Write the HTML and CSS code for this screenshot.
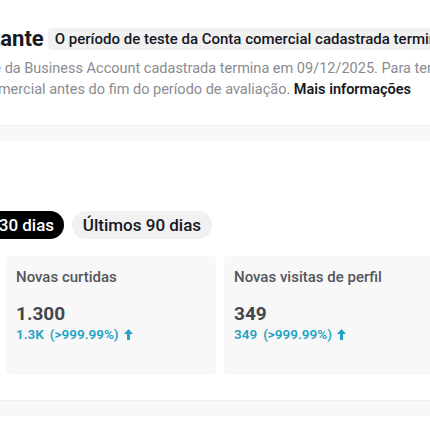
FILE: index.html
```html
<!DOCTYPE html>
<html lang="pt-BR">
<head>
<meta charset="utf-8">
<title>Análises</title>
<link rel="stylesheet" href="styles.css">
</head>
<body>
<div class="page">
  <section class="notice">
    <div class="title-row">
      <h2 class="notice-title">Importante</h2>
      <span class="notice-badge">O período de teste da Conta comercial cadastrada termina em breve</span>
    </div>
    <div class="notice-text">
      <div class="line line-1">O período de teste da Business Account cadastrada termina em 09/12/2025. Para ter acesso contínuo,</div>
      <div class="line line-2"><span>mude para uma conta comercial antes do fim do período de avaliação. <a class="more" href="#">Mais informações</a></span></div>
    </div>
  </section>

  <div class="band"></div>

  <section class="overview">
    <div class="tabs">
      <button class="tab tab-active">Últimos 30 dias</button>
      <button class="tab">Últimos 90 dias</button>
    </div>
    <div class="cards">
      <div class="card">
        <div class="card-title">Novas curtidas</div>
        <div class="card-value">1.300</div>
        <div class="card-delta">
          <span>1.3K</span>
          <span>(&gt;999.99%)</span>
          <svg class="arrow" width="9" height="11" viewBox="0 0 9 11"><path d="M4.5 0 L9 5 H6 V11 H3 V5 H0 Z" fill="currentColor"/></svg>
        </div>
      </div>
      <div class="card">
        <div class="card-title">Novas visitas de perfil</div>
        <div class="card-value">349</div>
        <div class="card-delta">
          <span>349</span>
          <span>(&gt;999.99%)</span>
          <svg class="arrow" width="9" height="11" viewBox="0 0 9 11"><path d="M4.5 0 L9 5 H6 V11 H3 V5 H0 Z" fill="currentColor"/></svg>
        </div>
      </div>
    </div>
  </section>

  <div class="band band-bottom"></div>
</div>
</body>
</html>
```

FILE: styles.css
```css
html, body {
  margin: 0;
  padding: 0;
  background: #ffffff;
}

body {
  width: 430px;
  height: 430px;
  overflow: hidden;
  font-family: Roboto, "Liberation Sans", Arial, sans-serif;
  color: #161823;
}

.page {
  width: 430px;
  overflow: hidden;
}

.notice {
  padding-top: 28px;
}

.title-row {
  display: flex;
  align-items: center;
  gap: 4px;
  white-space: nowrap;
}

.notice-title {
  margin: 0 0 0 -66px;
  font-size: 22px;
  line-height: 22px;
  font-weight: 700;
  color: #161823;
}

.notice-badge {
  flex: none;
  background: #f1f1f2;
  border-radius: 4px;
  padding: 0 7px;
  font-size: 15px;
  line-height: 22px;
  font-weight: 500;
  color: #161823;
}

.notice-text {
  margin-top: 8px;
  font-size: 14.5px;
  line-height: 21px;
  color: #8a8b91;
  white-space: nowrap;
}

.line-1 {
  text-indent: -117px;
}

.line-2 {
  display: flex;
  justify-content: flex-end;
  padding-right: 19px;
}

.line-2 > span {
  flex: none;
}

.more {
  color: #161823;
  font-weight: 600;
  text-decoration: none;
}

.band {
  margin-top: 25px;
  height: 15px;
  background: #f8f8f8;
  border-top: 1px solid #efeff0;
}

.overview {
  padding-top: 70px;
}

.tabs {
  display: flex;
  gap: 8px;
  margin-left: -74px;
}

.tab {
  flex: none;
  width: 140px;
  height: 28px;
  border: none;
  border-radius: 14px;
  padding: 0;
  font-family: inherit;
  font-size: 17px;
  font-weight: 500;
  background: #f1f1f2;
  color: #161823;
}

.tab-active {
  width: 138px;
  background: #000000;
  color: #ffffff;
}

.cards {
  display: grid;
  grid-template-columns: 210px 210px;
  gap: 8px;
  margin-top: 17px;
  padding-left: 6px;
}

.card {
  height: 119px;
  box-sizing: border-box;
  background: #f8f8f8;
  border-radius: 5px;
  padding: 11px 10px 0;
}

.card-title {
  font-size: 15px;
  line-height: 20px;
  font-weight: 500;
  color: #54555b;
  white-space: nowrap;
}

.card-value {
  margin-top: 16px;
  font-size: 19px;
  line-height: 22px;
  font-weight: 700;
  color: #45464c;
}

.card-delta {
  display: flex;
  align-items: center;
  gap: 6px;
  font-size: 13.5px;
  line-height: 18px;
  font-weight: 600;
  color: #23a3c4;
}

.arrow {
  display: block;
  margin-left: -1px;
}

.band-bottom {
  margin-top: 25px;
}
```
